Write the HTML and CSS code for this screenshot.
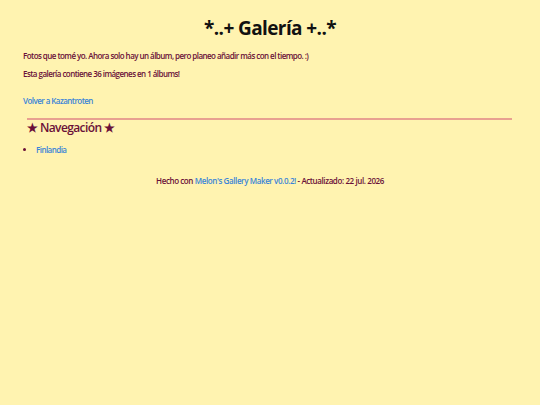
FILE: index.html
```html
<!DOCTYPE html>
<html lang="es">
<head>
<meta charset="utf-8">
<title>Galería</title>
<link rel="stylesheet" href="styles.css">
</head>
<body>
<h1 class="title">*..+ Galería +..*</h1>
<p class="text">Fotos que tomé yo. Ahora solo hay un álbum, pero planeo añadir más con el tiempo. :)</p>
<p class="text">Esta galería contiene 36 imágenes en 1 álbums!</p>
<p class="back"><a href="#">Volver a Kazantroten</a></p>
<section class="nav">
<h2 class="nav-title">★ Navegación ★</h2>
<ul class="nav-list">
<li><a href="#">Finlandia</a></li>
</ul>
</section>
<p class="footer">Hecho con <a href="#">Melon's Gallery Maker v0.0.2!</a> - Actualizado: 22 jul. 2026</p>
</body>
</html>
```
FILE: styles.css
```css
html { background: #fff3b0; }
body {
  margin: 0;
  padding: 8px 23px;
  font-family: "Open Sans", "Noto Sans", sans-serif;
  font-size: 8px;
  line-height: 11px;
  font-weight: 600;
  color: #6a1038;
}
a { color: #3a84d8; text-decoration: none; }
.title {
  font-size: 19px;
  line-height: 22px;
  color: #111;
  text-align: center;
  margin: 9px 0 11px;
  letter-spacing: -0.6px;
}
.text { margin: 0 0 7px; letter-spacing: -0.55px; }
.back { margin: 16px 0 12px; letter-spacing: -0.55px; }
.nav {
  margin: 0 5px 0 4px;
  border-top: 2px solid #e8a090;
}
.nav-title {
  font-size: 12px;
  line-height: 16px;
  font-weight: 600;
  margin: 0 0 8px;
  letter-spacing: -0.6px;
}
.nav-list { margin: 0 0 20px; padding-left: 9px; letter-spacing: -0.55px; }
.nav-list li { margin: 0; }
.footer { text-align: center; margin: 0; letter-spacing: -0.4px; }
```
